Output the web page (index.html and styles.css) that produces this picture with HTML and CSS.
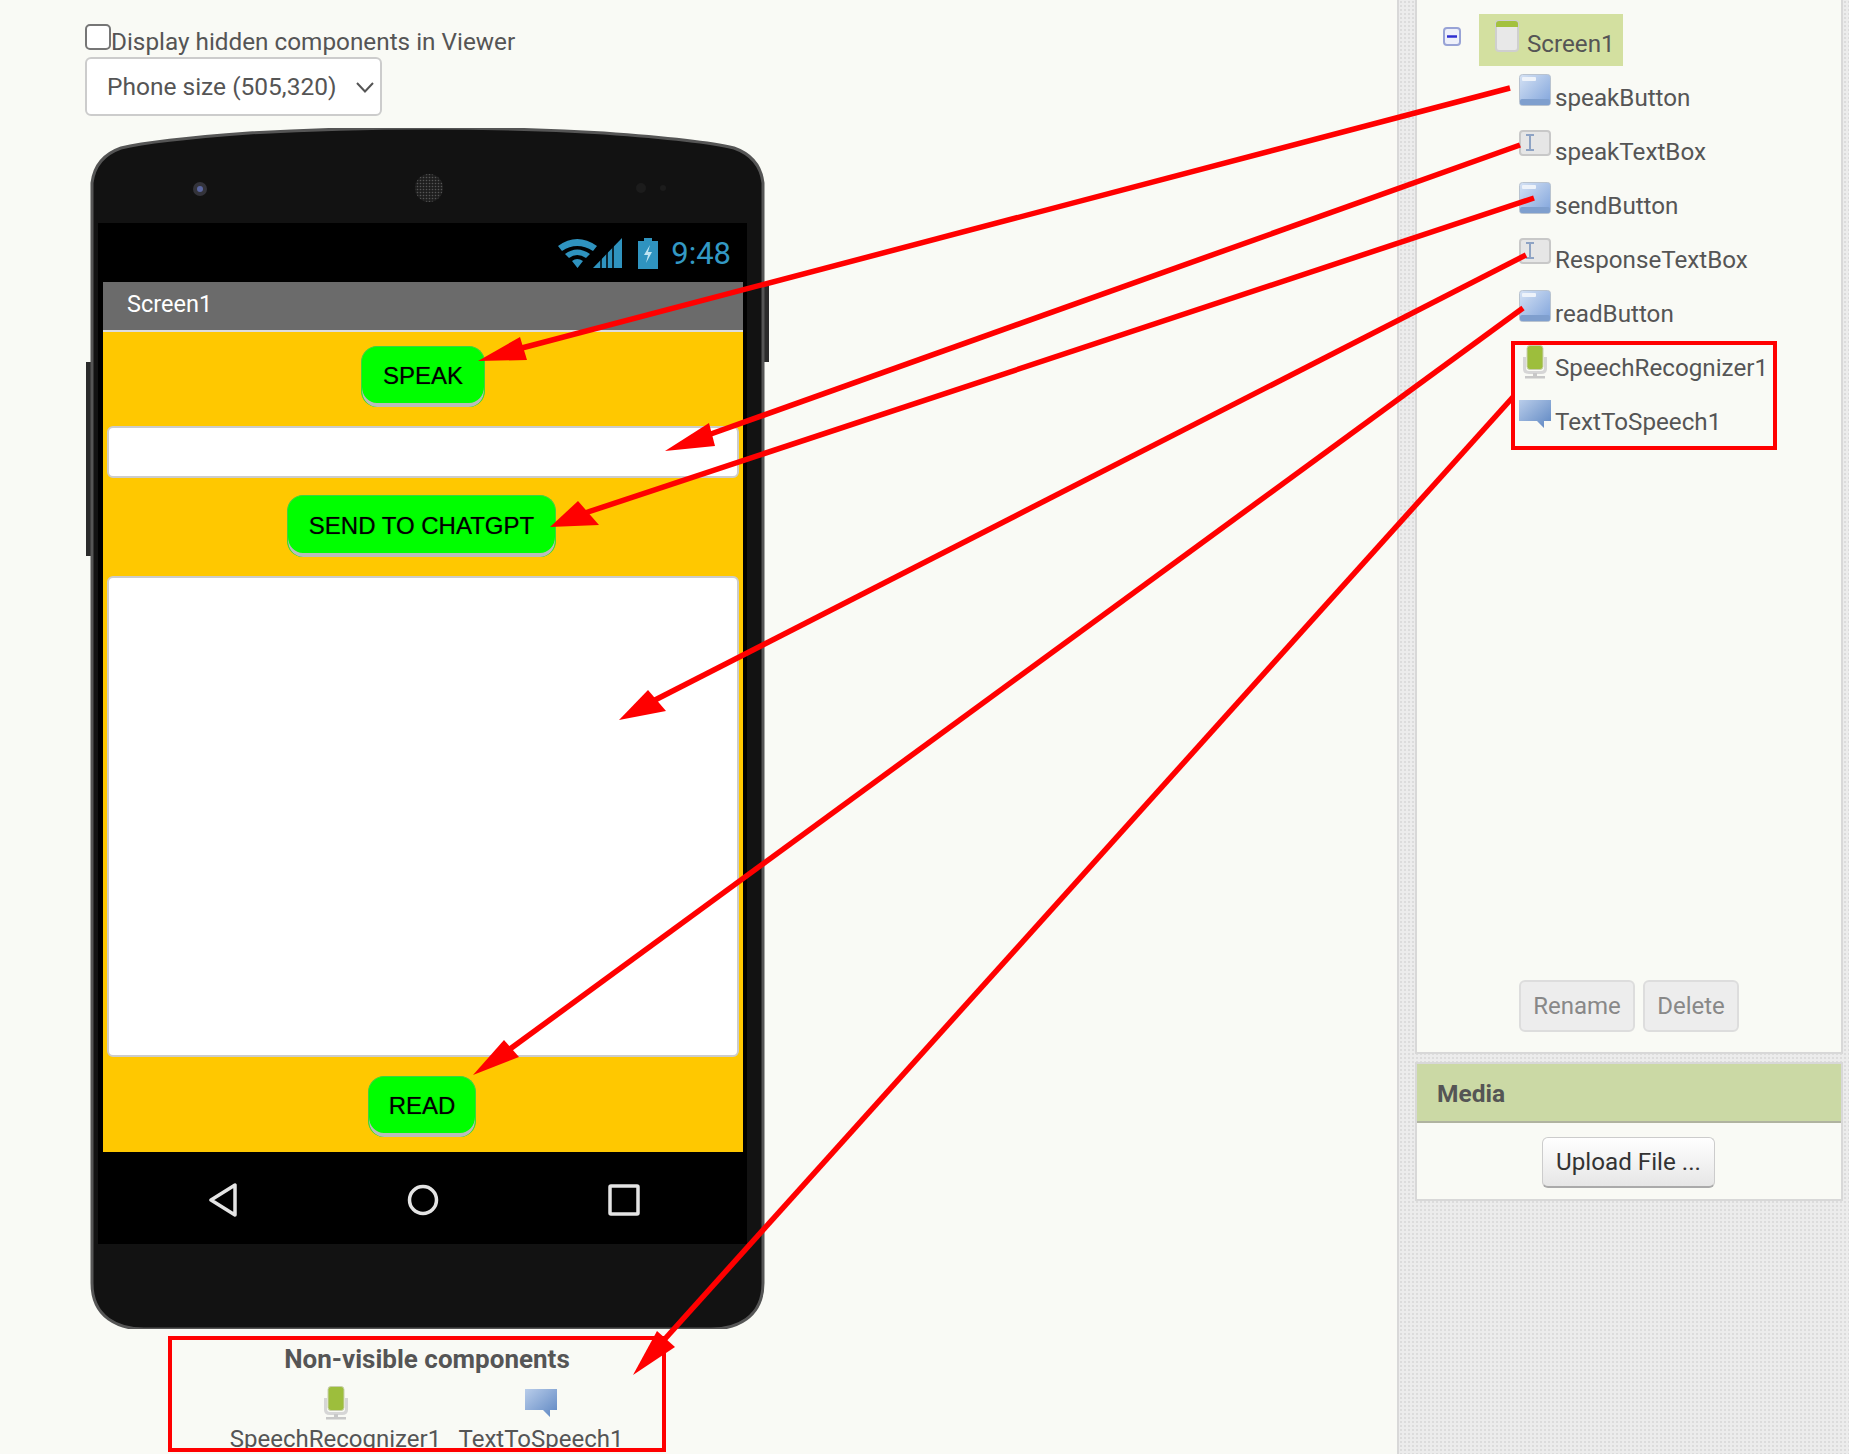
FILE: index.html
```html
<!DOCTYPE html>
<html>
<head>
  <title>Designer</title>
  <link rel="stylesheet" href="styles.css">
</head>
<body>
  <svg width="0" height="0" class="defs">
    <defs>
      <linearGradient id="btnBlue" x1="0" y1="0" x2="1" y2="1">
        <stop offset="0" stop-color="#d5e2f4"/>
        <stop offset="1" stop-color="#7fa3db"/>
      </linearGradient>
      <linearGradient id="bubbleBlue" x1="0" y1="0" x2="1" y2="1">
        <stop offset="0" stop-color="#b9cdea"/>
        <stop offset="1" stop-color="#5d86c2"/>
      </linearGradient>
      <pattern id="mesh" width="3" height="3" patternUnits="userSpaceOnUse">
        <rect width="3" height="3" fill="#1e1e1e"/>
        <circle cx="1.500" cy="1.500" r="0.800" fill="#555"/>
      </pattern>
      <symbol id="ic-button" viewBox="0 0 32 32">
        <rect x="0.500" y="0.500" width="31" height="31" rx="3" fill="url(#btnBlue)" stroke="#b9c3cf"/>
        <rect x="3" y="3" width="14" height="4" rx="1" fill="#eef3fa"/>
        <rect x="1" y="25" width="30" height="6" rx="2" fill="#7f9fce"/>
      </symbol>
      <symbol id="ic-textbox" viewBox="0 0 32 26">
        <rect x="1" y="1" width="30" height="24" rx="3" fill="#e6e6e6" stroke="#c8c8c8" stroke-width="2"/>
        <path d="M7 5h8M7 20h8M11 5v15" fill="none" stroke="#8ea3c4" stroke-width="2"/>
      </symbol>
      <symbol id="ic-mic" viewBox="0 0 26 34">
        <path d="M1 12v12q0 5 6 5h12q6 0 6-5V12h-3v11q0 3-3 3H7q-3 0-3-3V12z" fill="#d6d6d6"/>
        <rect x="5" y="0.500" width="16" height="24" rx="3" fill="#9dbe3c" stroke="#c9cfae"/>
        <rect x="11" y="28" width="4" height="4" fill="#c8c8c8"/>
        <rect x="3" y="31" width="20" height="2.500" fill="#c8c8c8"/>
      </symbol>
      <symbol id="ic-speech" viewBox="0 0 32 30">
        <path d="M0 1h32v21h-7v7l-7-7H0z" fill="url(#bubbleBlue)"/>
      </symbol>
      <symbol id="ic-form" viewBox="0 0 24 32">
        <rect x="1" y="1" width="22" height="30" rx="3" fill="#e8e8e8" stroke="#cfcfcf" stroke-width="2"/>
        <path d="M1 7V4q0-3 3-3h16q3 0 3 3v3z" fill="#a3c13f"/>
      </symbol>
    </defs>
  </svg>

  <div class="page">
    <div class="viewer">
      <div class="hidden-row">
        <input type="checkbox" class="hidden-check">
        <span class="hidden-label">Display hidden components in Viewer</span>
      </div>
      <div class="select-wrap">
        <select class="size-select">
          <option>Phone size (505,320)</option>
        </select>
        <svg class="select-arrow" width="18" height="11" viewBox="0 0 18 11"><path d="M1 1l8 8.500 8-8.500" fill="none" stroke="#555" stroke-width="2"/></svg>
      </div>

      <div class="phone">
        <svg class="phone-shell" viewBox="0 0 683 1201">
          <rect x="0" y="234" width="10" height="194" fill="#2b2b2b"/>
          <rect x="672" y="155" width="11" height="79" fill="#2b2b2b"/>
          <path d="M6 55 C8 38 18 26 35 20 Q68 12 163 5 Q250 0 341 0 Q430 0 518 5 Q615 12 648 20 C665 26 675 38 677 55 V1155 C677 1190 650 1201 625 1201 H58 C33 1201 6 1190 6 1155 Z" fill="#121212" stroke="#555" stroke-width="3"/>
          <circle cx="114" cy="61" r="7" fill="#33333a"/>
          <circle cx="114" cy="61" r="3" fill="#5a66a0"/>
          <ellipse cx="343" cy="60" rx="14" ry="14" fill="url(#mesh)"/>
          <circle cx="555" cy="60" r="5" fill="#1c1c1c"/>
          <circle cx="577" cy="60" r="3" fill="#1c1c1c"/>
        </svg>
        <div class="screen">
          <div class="status-bar">
            <svg class="status-icon" width="39" height="30" viewBox="0 0 39 30">
              <path d="M0 8Q19 -6 39 8L35 13Q19 3 4 13ZM7 16Q19 7 32 16L28 20Q19 14 11 20ZM14 23Q19 19 25 23L19.500 30Z" fill="#2f93bf"/>
            </svg>
            <svg class="status-icon signal" width="29" height="30" viewBox="0 0 29 30">
              <path d="M0 30L29 0V30Z" fill="#2f93bf"/>
              <path d="M8 30V20M14 30V14M20 30V8" stroke="#000" stroke-width="1.500"/>
            </svg>
            <svg class="status-icon battery" width="20" height="31" viewBox="0 0 20 31">
              <path d="M6 0h8v3h6v28H0V3h6z" fill="#2f93bf"/>
              <path d="M12 7L6 17h4l-2 8 6-11h-4z" fill="#bfe4f2"/>
            </svg>
            <span class="clock">9:48</span>
          </div>
          <div class="app">
            <div class="title-bar">Screen1</div>
            <div class="app-body">
              <div class="app-btn btn-speak">SPEAK</div>
              <div class="app-box box-small"></div>
              <div class="app-btn btn-send">SEND TO CHATGPT</div>
              <div class="app-box box-large"></div>
              <div class="app-btn btn-read">READ</div>
            </div>
          </div>
          <div class="nav-bar">
            <svg width="28" height="34" viewBox="0 0 28 34"><path d="M26 2V32L2 17Z" fill="none" stroke="#e4e4e4" stroke-width="3.500" stroke-linejoin="round"/></svg>
            <svg width="32" height="34" viewBox="0 0 32 34"><circle cx="16" cy="17" r="13.500" fill="none" stroke="#e4e4e4" stroke-width="3.500"/></svg>
            <svg width="32" height="34" viewBox="0 0 32 34"><rect x="2" y="3" width="28" height="28" rx="1" fill="none" stroke="#e4e4e4" stroke-width="3.500"/></svg>
          </div>
        </div>
      </div>

      <div class="nonvisible">
        <div class="nonvisible-title">Non-visible components</div>
        <div class="nonvisible-items">
          <div class="nv-item nv-speech">
            <svg class="nv-icon" width="26" height="34"><use href="#ic-mic"/></svg>
            <span>SpeechRecognizer1</span>
          </div>
          <div class="nv-item nv-tts">
            <svg class="nv-icon" width="32" height="34"><use href="#ic-speech"/></svg>
            <span>TextToSpeech1</span>
          </div>
        </div>
      </div>
    </div>

    <div class="sidebar">
      <div class="panel tree-panel">
        <div class="tree-root">
          <svg class="collapse" width="18" height="19" viewBox="0 0 18 19">
            <rect x="1" y="1" width="16" height="17" rx="3" fill="#eef0fa" stroke="#98a3d6" stroke-width="2"/>
            <path d="M4 9.500h10" stroke="#2f2fd0" stroke-width="2.500"/>
          </svg>
          <div class="root-label">
            <svg width="24" height="32"><use href="#ic-form"/></svg>
            <span>Screen1</span>
          </div>
        </div>
        <div class="tree-row"><svg width="32" height="32"><use href="#ic-button"/></svg><span>speakButton</span></div>
        <div class="tree-row"><svg width="32" height="26" class="ic-low"><use href="#ic-textbox"/></svg><span>speakTextBox</span></div>
        <div class="tree-row"><svg width="32" height="32"><use href="#ic-button"/></svg><span>sendButton</span></div>
        <div class="tree-row"><svg width="32" height="26" class="ic-low"><use href="#ic-textbox"/></svg><span>ResponseTextBox</span></div>
        <div class="tree-row"><svg width="32" height="32"><use href="#ic-button"/></svg><span>readButton</span></div>
        <div class="tree-group">
          <div class="tree-row"><svg width="32" height="34"><use href="#ic-mic"/></svg><span>SpeechRecognizer1</span></div>
          <div class="tree-row"><svg width="32" height="30"><use href="#ic-speech"/></svg><span>TextToSpeech1</span></div>
        </div>
        <div class="tree-actions">
          <button class="btn-flat btn-rename">Rename</button>
          <button class="btn-flat btn-delete">Delete</button>
        </div>
      </div>
      <div class="panel media-panel">
        <div class="media-head">Media</div>
        <div class="media-body">
          <button class="btn-upload">Upload File ...</button>
        </div>
      </div>
    </div>
  </div>

  <svg class="arrows" viewBox="0 0 1849 1454">
    <g stroke="#f00" stroke-width="5.500" fill="none">
      <path d="M1510 88L518 349"/>
      <path d="M1520 145L708 435"/>
      <path d="M1534 198L585 513"/>
      <path d="M1526 255L655 700"/>
      <path d="M1523 308L510 1049"/>
      <path d="M1513 397L664 1340"/>
    </g>
    <g fill="#f00">
      <path d="M478 361L520 337L527 360Z"/>
      <path d="M665 451L709 423L715 446Z"/>
      <path d="M550 527L578 501L599 525Z"/>
      <path d="M619 720L648 690L666 711Z"/>
      <path d="M473 1075L504 1040L519 1057Z"/>
      <path d="M633 1375L657 1331L675 1347Z"/>
    </g>
  </svg>
</body>
</html>
```

FILE: styles.css
```css
html, body {
  margin: 0;
  padding: 0;
}
body {
  position: relative;
  width: 1849px;
  height: 1454px;
  overflow: hidden;
  background-color: #f9faf5;
  font-family: Roboto, "Liberation Sans", sans-serif;
  font-size: 24px;
  color: #555;
}
.defs {
  position: absolute;
}
.page {
  display: flex;
  height: 1454px;
}

/* left side, the viewer */
.viewer {
  width: 1397px;
  box-sizing: border-box;
  padding: 24px 0 0 85px;
}
.hidden-row {
  display: flex;
  align-items: flex-end;
  height: 33px;
}
.hidden-check {
  appearance: none;
  width: 26px;
  height: 26px;
  box-sizing: border-box;
  margin: 0 0 7px 0;
  background-color: #fff;
  border: 2px solid #767676;
  border-radius: 5px;
}
.hidden-label {
  margin-bottom: -3px;
  font-size: 24.300px;
  line-height: 36px;
}
.select-wrap {
  position: relative;
  width: 297px;
}
.size-select {
  appearance: none;
  display: block;
  width: 297px;
  height: 59px;
  padding-left: 20px;
  background-color: #fff;
  border: 2px solid #ccc;
  border-radius: 6px;
  font-family: Roboto, sans-serif;
  font-size: 24.500px;
  color: #555;
}
.select-arrow {
  position: absolute;
  right: 8px;
  top: 25px;
}
.phone {
  position: relative;
  width: 683px;
  height: 1201px;
  margin: 12px 0 0 1px;
}
.phone-shell {
  position: absolute;
  left: 0;
  top: 0;
  width: 683px;
  height: 1201px;
}
.screen {
  position: relative;
  box-sizing: border-box;
  width: 649px;
  margin-left: 12px;
  padding-top: 95px;
}
.status-bar {
  display: flex;
  justify-content: flex-end;
  height: 59px;
  box-sizing: border-box;
  padding: 15px 16px 0 0;
  background-color: #000;
}
.status-icon {
  margin-right: -4px;
}
.signal {
  margin-right: 16px;
}
.battery {
  margin-right: 13px;
}
.clock {
  font-size: 31px;
  line-height: 31px;
  color: #3399c4;
}
.app {
  background-color: #000;
  padding: 0 4px 0 5px;
}
.title-bar {
  height: 48px;
  padding-left: 24px;
  font-size: 23.500px;
  line-height: 44px;
  background-color: #6b6b6b;
  border-bottom: 2px solid #ddd;
  color: #fff;
}
.app-body {
  display: flex;
  flex-direction: column;
  align-items: center;
  height: 820px;
  box-sizing: border-box;
  padding-top: 14px;
  background-color: #ffc800;
}
.app-btn {
  height: 61px;
  box-sizing: border-box;
  padding-top: 11px;
  background-color: #00ff00;
  border: 1px solid #3ed43e;
  border-bottom: 0;
  border-radius: 16px;
  box-shadow: inset 0 -4px 0 #bbb;
  font-family: "Liberation Sans", sans-serif;
  font-size: 24px;
  line-height: 36px;
  text-align: center;
  color: #000;
  text-shadow: 0 0 1px rgba(0, 0, 0, 0.5);
}
.btn-speak {
  width: 124px;
}
.btn-send {
  width: 269px;
  height: 62px;
  padding-top: 12px;
  margin-left: -3px;
}
.btn-read {
  width: 108px;
  margin-left: -2px;
}
.app-box {
  width: 632px;
  box-sizing: border-box;
  background-color: #fff;
  border: 2px solid #ccc;
  border-radius: 6px;
}
.box-small {
  height: 52px;
  margin: 19px 0 17px;
}
.box-large {
  height: 481px;
  margin: 19px 0 19px;
}
.nav-bar {
  display: flex;
  justify-content: space-between;
  align-items: center;
  height: 92px;
  box-sizing: border-box;
  padding: 4px 107px 0 111px;
  background-color: #000;
}

/* the box under the phone */
.nonvisible {
  position: relative;
  width: 498px;
  height: 116px;
  box-sizing: border-box;
  margin: 7px 0 0 83px;
  padding-top: 8px;
}
.nonvisible::after {
  content: "";
  position: absolute;
  left: 0;
  top: 0;
  right: 0;
  bottom: 0;
  border: 4px solid #f00;
}
.nonvisible-title {
  height: 30px;
  padding-left: 20px;
  font-size: 26px;
  line-height: 30px;
  font-weight: 700;
  text-align: center;
}
.nonvisible-items {
  display: flex;
  margin-top: 12px;
  margin-left: 62px;
}
.nv-item {
  display: flex;
  flex-direction: column;
  align-items: center;
  white-space: nowrap;
}
.nv-speech {
  width: 211px;
}
.nv-tts {
  width: 164px;
  margin-left: 18px;
}
.nv-icon {
  height: 34px;
  margin-bottom: 5px;
}

/* right side */
.sidebar {
  width: 452px;
  box-sizing: border-box;
  padding: 0 6px 0 16px;
  border-left: 2px solid #d8d8d8;
  background-color: #ececec;
  background-image: radial-gradient(#dcdcdc 1px, transparent 1px);
  background-size: 4px 4px;
}
.panel {
  background-color: #f9faf5;
  border: 2px solid #d8d8d8;
}
.tree-panel {
  display: flex;
  flex-direction: column;
  height: 1057px;
  box-sizing: border-box;
  margin-top: -3px;
  padding-top: 15px;
  font-size: 24.200px;
}
.tree-root {
  display: flex;
  height: 52px;
  margin-bottom: 8px;
  padding-left: 26px;
}
.collapse {
  margin: 13px 18px 0 0;
}
.root-label {
  display: flex;
  width: 144px;
  padding: 6px 0 0 16px;
  box-sizing: border-box;
  background-color: #d3e0a0;
}
.root-label span {
  margin: 10px 0 0 8px;
}
.tree-row {
  display: flex;
  height: 54px;
  padding-left: 102px;
}
.tree-row span {
  margin: 10px 0 0 4px;
  line-height: 28px;
  white-space: nowrap;
}
.ic-low {
  margin-top: 2px;
}
.tree-group {
  width: 266px;
  height: 109px;
  box-sizing: border-box;
  margin: -3px 0 0 94px;
  border: 4px solid #f00;
}
.tree-group .tree-row {
  padding-left: 4px;
}
.tree-group .tree-row span {
  margin-top: 9px;
}
.tree-actions {
  display: flex;
  gap: 8px;
  margin-top: auto;
  padding: 0 0 20px 102px;
}
.btn-flat {
  height: 52px;
  padding: 0;
  background-color: #ededed;
  border: 2px solid #ddd;
  border-radius: 6px;
  font-family: Roboto, sans-serif;
  font-size: 24px;
  color: #888;
}
.btn-rename {
  width: 116px;
}
.btn-delete {
  width: 96px;
}
.media-panel {
  height: 139px;
  box-sizing: border-box;
  margin-top: 8px;
}
.media-head {
  height: 59px;
  padding-left: 20px;
  font-size: 24.500px;
  line-height: 59px;
  font-weight: 700;
  background-color: #cbd9a5;
  border-bottom: 2px solid #b0b3a0;
  box-sizing: border-box;
}
.media-body {
  display: flex;
  padding: 14px 0 0 125px;
}
.btn-upload {
  width: 173px;
  height: 51px;
  padding: 0;
  background: linear-gradient(#fff, #e6e6e6);
  border: 1px solid #ccc;
  border-bottom: 2px solid #aaa;
  border-radius: 6px;
  font-family: Roboto, sans-serif;
  font-size: 24.200px;
  color: #333;
}

/* red arrows drawn over everything */
.arrows {
  position: absolute;
  left: 0;
  top: 0;
  width: 1849px;
  height: 1454px;
  pointer-events: none;
}
```
